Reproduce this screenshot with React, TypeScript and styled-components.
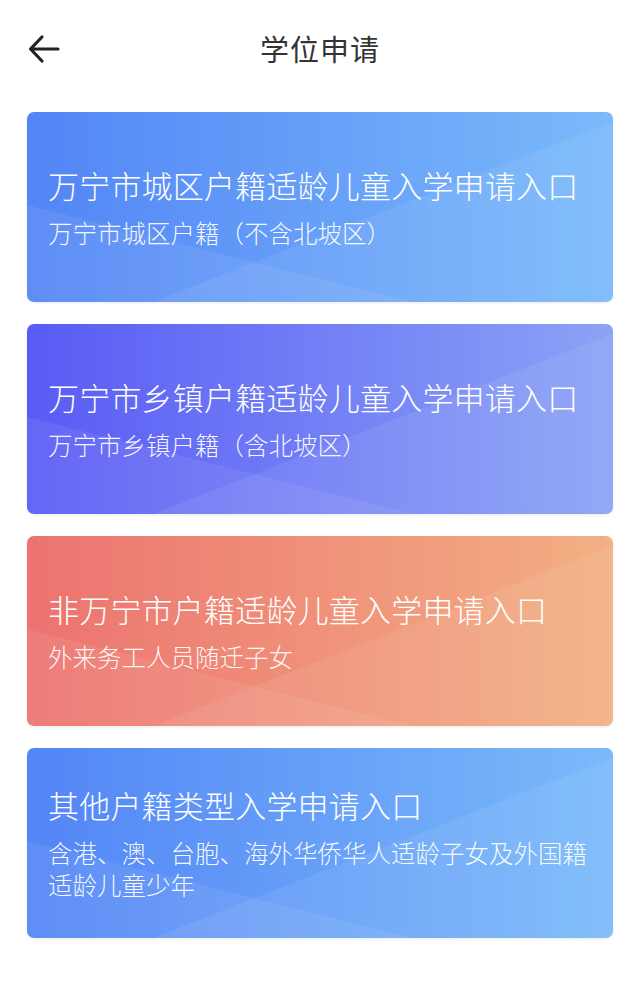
import React from 'react';
import styled, { createGlobalStyle } from 'styled-components';

const GlobalStyle = createGlobalStyle`
  html, body {
    margin: 0;
    padding: 0;
    background: #ffffff;
  }
  body {
    font-family: "Noto Sans CJK SC", "Noto Sans", sans-serif;
  }
`;

type Entry = {
  title: string;
  desc: string;
  from: string;
  to: string;
};

const entries: Entry[] = [
  {
    title: '万宁市城区户籍适龄儿童入学申请入口',
    desc: '万宁市城区户籍（不含北坡区）',
    from: '#5385f6',
    to: '#7abafa',
  },
  {
    title: '万宁市乡镇户籍适龄儿童入学申请入口',
    desc: '万宁市乡镇户籍（含北坡区）',
    from: '#595bf5',
    to: '#8ba3f6',
  },
  {
    title: '非万宁市户籍适龄儿童入学申请入口',
    desc: '外来务工人员随迁子女',
    from: '#ec7370',
    to: '#f3b083',
  },
  {
    title: '其他户籍类型入学申请入口',
    desc: '含港、澳、台胞、海外华侨华人适龄子女及外国籍适龄儿童少年',
    from: '#5385f6',
    to: '#7abafa',
  },
];

function BackArrow() {
  return (
    <svg width="34" height="32" viewBox="0 0 34 32" fill="none">
      <path
        d="M31 16H4M15 4L3.5 16L15 28"
        stroke="#222222"
        strokeWidth="3.2"
        strokeLinecap="round"
        strokeLinejoin="round"
      />
    </svg>
  );
}

export default function App() {
  return (
    <Page>
      <GlobalStyle />
      <Header>
        <BackButton>
          <BackArrow />
        </BackButton>
        <HeaderTitle>学位申请</HeaderTitle>
      </Header>
      <CardList>
        {entries.map(e => (
          <Card key={e.title} $from={e.from} $to={e.to}>
            <CardTitle>{e.title}</CardTitle>
            <CardDesc>{e.desc}</CardDesc>
          </Card>
        ))}
      </CardList>
    </Page>
  );
}

const Page = styled.div`
  width: 640px;
  min-height: 983px;
  background: #ffffff;
`;

const Header = styled.div`
  position: relative;
  height: 98px;
  display: flex;
  align-items: center;
  justify-content: center;
`;

const BackButton = styled.div`
  position: absolute;
  left: 27px;
  top: 33px;
  width: 34px;
  height: 32px;
  display: flex;
`;

const HeaderTitle = styled.div`
  font-size: 29px;
  font-weight: 400;
  color: #333333;
  letter-spacing: 1px;
  line-height: 40px;
  margin-top: -2px;
`;

const CardList = styled.div`
  display: flex;
  flex-direction: column;
  gap: 22px;
  padding: 14px 27px 40px;
`;

const Card = styled.div<{ $from: string; $to: string }>`
  position: relative;
  overflow: hidden;
  height: 190px;
  box-sizing: border-box;
  border-radius: 7px;
  padding: 0 18px 0 21px;
  display: flex;
  flex-direction: column;
  justify-content: center;
  background: linear-gradient(90deg, ${p => p.$from}, ${p => p.$to});
  box-shadow: 0 1px 3px rgba(0, 0, 0, 0.08);

  &::before,
  &::after {
    content: '';
    position: absolute;
    inset: 0;
    background: rgba(255, 255, 255, 0.07);
    pointer-events: none;
  }

  &::before {
    clip-path: polygon(0 49%, 66% 100%, 0 100%);
  }

  &::after {
    clip-path: polygon(21.5% 100%, 100% 5%, 100% 100%);
  }
`;

const CardTitle = styled.div`
  position: relative;
  z-index: 1;
  font-size: 31px;
  font-weight: 300;
  letter-spacing: 0.2px;
  line-height: 40px;
  color: #ffffff;
  white-space: nowrap;
`;

const CardDesc = styled.div`
  position: relative;
  z-index: 1;
  margin-top: 12px;
  font-size: 24.5px;
  font-weight: 300;
  line-height: 32px;
  color: rgba(255, 255, 255, 0.95);
`;
